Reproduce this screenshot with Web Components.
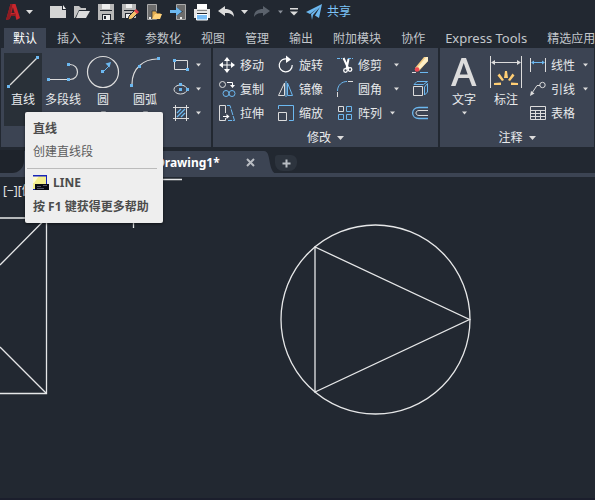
<!DOCTYPE html>
<html lang="zh-CN">
<head>
<meta charset="utf-8">
<title>Drawing1</title>
<style>
html,body{height:100%}
body{margin:0;background:#222831;overflow:hidden;font:12px/16px "Noto Sans","Noto Sans CJK SC",sans-serif;color:#e8eaec}
</style>
</head>
<body>
<cad-app></cad-app>
<script>
const B='#6cb8f0', W='#dcdcdc';
const sq=(x,y)=>`<rect x="${x-1.5}" y="${y-1.5}" width="3" height="3" fill="${B}" stroke="none"/>`;
const ICONS={
logo:[14,18,`<path d="M0 17L4.5 1H9.5L14 15L10.5 17L9.3 12.5H5L3.8 16Z" fill="#c8262c"/><path d="M6.9 4.2L8.6 10H5.4Z" fill="#3a2028"/><path d="M0 17L4.5 1H6.5L3.8 16ZM5 11.5L10 10.5L9.5 13H4.7Z" fill="#8d1c22"/>`],
caret:[7,4,`<path d="M0 0H7L3.5 4Z" fill="#dcdcdc"/>`],
caretdim:[7,4,`<path d="M1 .5H6L3.5 3.5Z" fill="#8a9099"/>`],
caretsm:[5,4,`<path d="M0 .5H5L2.5 3.5Z" fill="#dcdcdc"/>`],
custom:[8,8,`<path d="M0 0H8V1.500H0ZM0 3.500H8L4 7.500Z" fill="#dcdcdc"/>`],
new:[16,18,`<path d="M0 3H12V7H16V15H0Z" fill="#d4d4d4"/><path d="M13 2L16 6H13Z" fill="#f4f4f4"/>`],
open:[16,18,`<path d="M0 3H5L7 5H12V7H5L1 15H0Z" fill="#c4c4c4"/><path d="M5 8H16L12 15H2Z" fill="#dcdcdc"/>`],
save:[16,18,`<path d="M0 1H16V17H0Z" fill="#b8b8b8"/><path d="M4 1H12V6H4Z" fill="#eee"/><path d="M2 7H14V8H2ZM4 11H13V17H4Z" fill="#222831"/><path d="M5 12H12V17H5Z" fill="#eee"/><path d="M6 13H8V16H6Z" fill="#222831"/>`],
saveas:[16,18,`<path d="M0 1H14V15H0Z" fill="#b8b8b8"/><path d="M4 1H10V5H4Z" fill="#eee"/><path d="M2 7H13V8H2ZM3 10H10V16H3Z" fill="#222831"/><path d="M4 11H9V15H4Z" fill="#eee"/><path d="M6 17L7 13L13 7L16 10L10 16Z" fill="#f2c36b" stroke="#222831"/><path d="M12 8L14 6L17 9L15 11Z" fill="#e5434b"/>`],
phone:[16,18,`<path d="M1.500 1.500H10.500V16.500H1.500Z" fill="#6c6c6c" stroke="#aaa"/><path d="M6 8H10L11 10H15L14 16H6Z" fill="#e1ac52" stroke="#222831" stroke-width=".7"/><path d="M9 11H16L14 16H6Z" fill="#ffd27b"/><path d="M3 14H5V16H3Z" fill="#eee"/>`],
phonein:[16,18,`<path d="M6.500 1.500H15.500V16.500H6.500Z" fill="#6c6c6c" stroke="#aaa"/><path d="M4 4L13 8.500L4 14Z" fill="#222831"/><path d="M0 7H6V4L12 8.500L6 13V10H0Z" fill="${B}"/><path d="M10 14H12V16H10Z" fill="#eee"/>`],
print:[16,18,`<path d="M3 1H13V6H3Z" fill="#fff"/><path d="M0 6H16V15H13V10H3V15H0Z" fill="#e4e4e4"/><path d="M3 7H13V8H3Z" fill="#888"/><path d="M2.500 11.500H13.500V17H2.500Z" fill="#79bdf5" stroke="#fff"/>`],
undo:[17,14,`<path d="M0 6L7 1V4C12 4 16 6 16 12C14 8.500 11 8 7 8V11Z" fill="#dcdcdc"/>`],
redo:[17,14,`<path d="M16 6L9 1V4C4 4 0 6 0 12C2 8.500 5 8 9 8V11Z" fill="#5b626c"/>`],
share:[16,16,`<path d="M0 8L16 0L13 14L9 11.500L14 3L7 11L6 16L5 10L12 4L4 10Z" fill="${B}"/>`],
line:[34,34,`<path d="M4 29L31 2" stroke="${W}" stroke-width="1.200"/>${sq(2.5,30.5)}${sq(31.5,1.5)}`],
pline:[34,34,`<path d="M3 23.500H21M24 8.500C34 8.500 34 23.500 24 23.500" stroke="${W}" stroke-width="1.200"/>${sq(2.5,23.5)}${sq(22.5,23.5)}${sq(22.5,8.5)}`],
circle:[34,34,`<circle cx="17" cy="16" r="15.5" stroke="${W}" stroke-width="1.200"/><path d="M18 15L23 10" stroke="${B}"/><path d="M19.500 7.500L25 6L23.500 11.500Z" fill="${B}"/>${sq(16.5,15.5)}`],
arc:[34,34,`<path d="M4 28C4 12 16 3 29 3" stroke="${W}" stroke-width="1.200"/>${sq(3.5,29.5)}${sq(11.5,10.5)}${sq(30.5,2.5)}`],
rect:[16,16,`<path d="M1.500 3.500H14.500V12.500H1.500Z" stroke="${W}"/>${sq(1.5,3.5)}${sq(14.5,12.5)}`],
ellipse:[16,16,`<ellipse cx="7.500" cy="8.500" rx="6.500" ry="4.500" stroke="${W}"/>${sq(7.500,3.500)}${sq(7.500,8.500)}${sq(14.500,8.500)}`],
hatch:[16,16,`<path d="M0 2.500H16M0 13.500H16M2.500 0V16M13.500 0V16" stroke="${W}"/><path d="M4 8L8 4M4 12L12 4M8 12L12 8" stroke="${B}" stroke-width="1.300"/>`],
move:[16,16,`<path d="M8 2V14M2 8H14" stroke="#fff"/><path d="M8 0L11 4H5ZM8 16L11 12H5ZM0 8L4 5V11ZM16 8L12 5V11Z" fill="#fff"/>`],
copy:[16,16,`<circle cx="3.500" cy="3.500" r="3" stroke="${W}"/><circle cx="7" cy="12.500" r="3" stroke="${B}"/><circle cx="13" cy="12.500" r="3" stroke="${B}"/><path d="M8 1.500H13.500V5" stroke="#fff"/><path d="M11 4H16L13.500 7Z" fill="#fff"/>`],
stretch:[16,16,`<path d="M6.500 8V.5H.5V15.500H6.500V13" stroke="${W}"/><path d="M4 11.500H9" stroke="#fff"/><path d="M7.500 9L10.500 11.500L7.500 14Z" fill="#fff"/><path d="M8 .5H11L15.500 15.500H9" stroke="${B}" stroke-dasharray="6 1"/>`],
rotate:[16,16,`<path d="M9.500 2.100A6.500 6.500 0 1 0 14.200 8" stroke="#fff" stroke-width="1.200"/><path d="M8 -1.500L13 2.500L8 6Z" fill="#fff"/>`],
mirror:[16,16,`<path d="M.5 14.500L6.500 2V14.500Z" stroke="${W}"/><path d="M9.500 14.500V2L14.500 14.500Z" stroke="${B}"/><path d="M8 0V16" stroke="${B}"/>`],
scale:[16,16,`<path d="M.5 4V.5H15.500V15.500H11" stroke="${B}"/><path d="M.5 7.500H8.500V15.500H.5Z" stroke="${W}"/>`],
trim:[16,16,`<path d="M0 1.500H5M11 1.500H16" stroke="${B}" stroke-dasharray="3 1"/><path d="M6.500 1L11.500 12M11.500 2L9.500 12" stroke="#fff" stroke-width="2"/><circle cx="8.500" cy="13.500" r="1.800" stroke="#fff" stroke-width="1.300"/><circle cx="13" cy="12.500" r="1.800" stroke="#fff" stroke-width="1.300"/>`],
fillet:[16,16,`<path d="M.5 10C.5 4 5 .5 10 .5" stroke="${B}"/><path d="M11 .5H16M.5 11V16" stroke="${W}"/>`],
array:[16,16,`<path d="M1.500 1.500H6.500V6.500H1.500Z" stroke="${W}"/><path d="M9.500 1.500H14.500V6.500H9.500ZM1.500 9.500H6.500V14.500H1.500ZM9.500 9.500H14.500V14.500H9.500Z" stroke="${B}"/>`],
erase:[16,16,`<path d="M0 15.500H4" stroke="${W}"/><path d="M8 15.500H16" stroke="${B}"/><path d="M3 11L12 0H16V4L7 14Z" fill="#f5cd84"/><path d="M14 0H16V4L8 12L6 10Z" fill="#fff0c8"/><circle cx="5" cy="12.500" r="2.300" fill="#ef4853"/>`],
explode:[16,16,`<path d="M1.500 5.500H10.500V14.500H1.500Z" stroke="${W}"/><path d="M2 3.500L5 .5H15.500L11.500 3.500ZM12.500 6L15.500 2.500V11L12.500 14Z" stroke="${B}"/>`],
offset:[16,16,`<path d="M16 2.500H7C-1.500 2.500-1.500 13.500 7 13.500H16" stroke="${B}" stroke-width="1.300"/><path d="M16 5.500H7C3 5.500 3 10.500 7 10.500H16" stroke="${W}"/>`],
text:[28,34,`<path d="M1 30L11.500 2H16L26.500 30H22L19 22H8.500L5.500 30ZM9.800 18.500H17.700L13.700 7Z" fill="${W}"/>`],
dim:[34,34,`<path d="M1.500 0V32M32.500 0V32M3 6.500H31" stroke="${W}"/><path d="M2 6.500L6 4V9ZM32 6.500L28 4V9Z" fill="${W}"/><path d="M16 15H18L19 22H15ZM8.500 19.500L10.500 17.500L15 24L13 25ZM25.500 19.500L23.500 17.500L19 24L21 25ZM5 29V27L12 26.500V29ZM29 29V27L22 26.500V29Z" fill="#ffce74"/>`],
linear:[16,16,`<path d="M.5 1V15M15.500 1V15" stroke="${W}"/><path d="M3 5.500H13" stroke="${B}"/><path d="M1 5.500L4 3.500V7.500ZM15 5.500L12 3.500V7.500Z" fill="${B}"/>`],
leader:[16,16,`<circle cx="12.500" cy="4" r="2.700" stroke="${W}"/><path d="M10 4.500H7L2 12" stroke="${W}"/><path d="M0 15L1 10L4.500 12.500Z" fill="${W}"/>`],
table:[16,16,`<path d="M.5 1.500H15.500V14.500H.5ZM.5 5.500H15.500M.5 8.500H15.500M.5 11.500H15.500M5.500 5V14M10.500 5V14" stroke="${W}"/>`],
cmd:[17,16,`<path d="M0 1H14V14H0Z" fill="#f4ee8d"/><path d="M0 1H6L1 8H0Z" fill="#fffbd0"/><path d="M0 0H14V1.500H0Z" fill="#1825b9"/><path d="M13.500 0V9M0 14.500H3" stroke="#1825b9"/><path d="M2 9H16V15H2Z" fill="#0a0a12"/><path d="M4 11.500H8M10 10.500H14M4 13.500H11" stroke="#556"/>`],
close:[9,9,`<path d="M1 1L8 8M8 1L1 8" stroke="#b9bdc3" stroke-width="2"/>`],
plus:[9,9,`<path d="M4.500 .5V8.500M.5 4.500H8.500" stroke="#b9bdc3" stroke-width="2"/>`]
};
const RESET='*{box-sizing:border-box}button{font:inherit;color:inherit;background:none;border:0;margin:0;padding:0;display:flex;align-items:center;white-space:nowrap}';
function define(name,css,html){
  customElements.define(name,class extends HTMLElement{
    constructor(){
      super();
      this.attachShadow({mode:'open'}).innerHTML=`<style>${RESET}${css}</style>${typeof html==='function'?html(this):html}`;
    }
  });
}

define('cad-icon',':host{display:block;flex:none}svg{display:block;overflow:visible;fill:none}',el=>{
  const [w,h,body]=ICONS[el.getAttribute('name')];
  return `<svg width="${w}" height="${h}" viewBox="0 0 ${w} ${h}" aria-hidden="true">${body}</svg>`;
});

define('tool-button',`:host{display:block}button{height:24px}.label{padding:2px 0 0 5px}.drop{margin-left:var(--drop,12px)}`,
el=>{
  const tip=el.getAttribute('tip');
  return `<button${tip?` aria-label="${tip}"`:''}><cad-icon name="${el.getAttribute('icon')}"></cad-icon>${tip?'':'<span class="label"><slot></slot></span>'}${el.hasAttribute('drop')?'<cad-icon class="drop" name="caretsm"></cad-icon>':''}</button>`;
});

define('big-button',`:host{display:block}button{flex-direction:column;padding:3px 0 0;width:100%;height:73px}span{display:block;margin-top:2px}.drop{margin-top:3px}
:host([active]) button{background:#293038}`,
el=>`<button><cad-icon name="${el.getAttribute('icon')}"></cad-icon><span><slot></slot></span>${el.hasAttribute('drop')?'<cad-icon class="drop" name="caretsm"></cad-icon>':''}</button>`);

define('ribbon-panel',`:host{display:flex;flex-direction:column;background:#3c4453;height:99px;flex:none}
.tools{display:flex;padding-top:5px;height:78px}
footer{display:flex;align-items:center;justify-content:center;gap:6px;height:21px;padding-top:2px}`,
el=>`<div class="tools"><slot></slot></div>${el.hasAttribute('name')?`<footer>${el.getAttribute('name')}<cad-icon name="caret"></cad-icon></footer>`:''}`);

define('quick-bar',`:host{display:flex;align-items:center;height:28px;padding:0 0 5px 6px}
button{height:22px}.g{display:flex;align-items:center}
.files{gap:8px;margin-left:17px}.logo{gap:6px}.undo{gap:6px;margin-left:8px}.more{margin-left:6px}.share{gap:5px;color:#7cc4f8;margin-left:8px}`,
`<button class="logo" aria-label="菜单"><cad-icon name="logo"></cad-icon><cad-icon name="caret"></cad-icon></button>
<div class="g files">${['new','open','save','saveas','phone','phonein','print'].map(n=>`<button aria-label="${n}"><cad-icon name="${n}"></cad-icon></button>`).join('')}</div>
<div class="g undo">${['undo','caret','redo','caretdim'].map(n=>`<button aria-label="${n}"><cad-icon name="${n}"></cad-icon></button>`).join('')}</div>
<button class="more" aria-label="自定义"><cad-icon name="custom"></cad-icon></button>
<button class="share"><cad-icon name="share"></cad-icon>共享</button>`);

define('ribbon-tabs',`:host{display:flex;gap:2px;padding-left:4px;height:20px;color:#c3c7cc;overflow:hidden}
button{flex:none;padding:2px 9px 0;height:20px}button:lang(en){font-size:13px;padding-top:0}button[aria-selected=true]{background:#3c4453;color:#fff}`,
['默认','插入','注释','参数化','视图','管理','输出','附加模块','协作','Express Tools','精选应用'].map((t,i)=>`<button role="tab"${/^E/.test(t)?' lang="en"':''} aria-selected="${!i}">${t}</button>`).join(''));

define('cad-ribbon',`:host{display:flex;gap:2px;padding-left:1px;overflow:hidden;border-bottom:3px solid #222831}
.draw{width:210px}.modify{width:225px}.note{width:154px}
.col{display:flex;flex-direction:column}
.b1{width:38px;margin-left:3px}.b2{width:42px}.b3{width:38px}.b4{width:46px}.shapes{margin-left:5px;--drop:7px}
.c1{width:59px}.c3{width:75px}.first{margin-left:6px}.near{--drop:8px}
.b5{width:42px;margin-left:3px}.b6{width:42px}.notes{margin-left:3px;--drop:8px}`,
`<ribbon-panel class="draw">
<big-button class="b1" icon="line" active>直线</big-button><big-button class="b2" icon="pline">多段线</big-button><big-button class="b3" icon="circle" drop>圆</big-button><big-button class="b4" icon="arc" drop>圆弧</big-button>
<div class="col shapes"><tool-button icon="rect" tip="矩形" drop></tool-button><tool-button icon="ellipse" tip="椭圆" drop></tool-button><tool-button icon="hatch" tip="图案填充" drop></tool-button></div>
</ribbon-panel>
<ribbon-panel class="modify" name="修改">
<div class="col c1 first"><tool-button icon="move">移动</tool-button><tool-button icon="copy">复制</tool-button><tool-button icon="stretch">拉伸</tool-button></div>
<div class="col c1"><tool-button icon="rotate">旋转</tool-button><tool-button icon="mirror">镜像</tool-button><tool-button icon="scale">缩放</tool-button></div>
<div class="col c3"><tool-button icon="trim" drop>修剪</tool-button><tool-button icon="fillet" drop>圆角</tool-button><tool-button class="near" icon="array" drop>阵列</tool-button></div>
<div class="col"><tool-button icon="erase" tip="删除"></tool-button><tool-button icon="explode" tip="分解"></tool-button><tool-button icon="offset" tip="偏移"></tool-button></div>
</ribbon-panel>
<ribbon-panel class="note" name="注释">
<big-button class="b5" icon="text" drop>文字</big-button><big-button class="b6" icon="dim">标注</big-button>
<div class="col notes"><tool-button icon="linear" drop>线性</tool-button><tool-button icon="leader" drop>引线</tool-button><tool-button icon="table">表格</tool-button></div>
</ribbon-panel>`);

define('file-tabs',`:host{display:flex;align-items:flex-start;height:27px;border-bottom:4px solid #3c4453;background:#222831}
.start{width:24px;height:23px;background:#1e232b;border-radius:0 0 12px 0}
.backing{background:#3c4453}
.doc{display:flex;align-items:center;justify-content:space-between;width:240px;height:23px;padding:0 9px 0 132px;background:#3c4453;font-weight:700;color:#fff;margin-top:1px}
.curve{width:16px;height:23px;display:block;margin-top:1px}
.add{width:22px;height:16px;margin:5px 0 0 -5px;justify-content:center;background:#2d343e;border-radius:3px 6px 8px 8px}`,
`<div class="backing"><div class="start"></div></div>
<div class="doc"><span>Drawing1*</span><button aria-label="关闭"><cad-icon name="close"></cad-icon></button></div>
<svg class="curve" viewBox="0 0 16 23"><path d="M0 0C8 0 3 21 13 23H0Z" fill="#3c4453"/></svg>
<button class="add" aria-label="新图形"><cad-icon name="plus"></cad-icon></button>`);

define('drawing-view',`:host{display:block;position:relative;flex:1;min-height:0;overflow:hidden;border-bottom:2px solid #1b1e2c}
svg{position:absolute;left:0;top:0;fill:none;stroke:#e6e7e8;stroke-width:1.3;overflow:visible}
.view{padding:6px 3px;color:#e6e7e8}`,
`<svg width="480" height="320" viewBox="0 0 480 320"><path d="M0 41H46.500V216.500H0" /><path d="M46.500 41L0 88M0 170L46.500 216.500"/><circle cx="375.500" cy="142.500" r="94.500"/><path d="M315 70V215L469.500 142.500Z"/><path d="M84 2.500H182M133.500 0V51"/></svg>
<div class="view">[−][俯视]</div>`);

define('cad-tooltip',`:host{position:absolute;left:25px;top:112px;width:138px;padding:9px 8px 8px;background:#eee;border-radius:2px;color:#505050;box-shadow:0 1px 3px #0008;box-sizing:border-box}
b,span{display:block;color:#4c4c4c}.sub{margin-top:7px;color:#5c5c5c}
hr{border:0;border-top:1px solid #bbb;margin:8px -2px 6px -6px}
.cmd{display:flex;align-items:center;gap:3px}.help{margin-top:8px;white-space:nowrap}`,
`<b>直线</b><span class="sub">创建直线段</span><hr><b class="cmd"><cad-icon name="cmd"></cad-icon>LINE</b><b class="help">按 F1 键获得更多帮助</b>`);

define('cad-app',':host{display:flex;flex-direction:column;height:100%;position:relative}',
`<quick-bar></quick-bar><ribbon-tabs role="tablist"></ribbon-tabs><cad-ribbon></cad-ribbon><file-tabs></file-tabs><drawing-view></drawing-view><cad-tooltip role="tooltip"></cad-tooltip>`);
</script>
</body>
</html>
